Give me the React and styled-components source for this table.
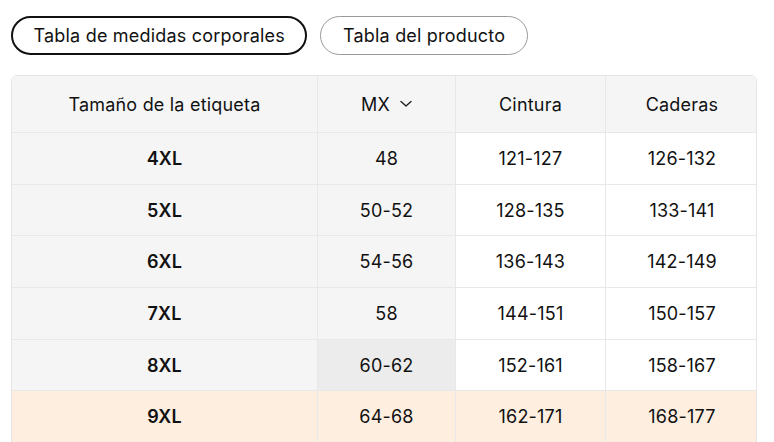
import React from "react";
import styled, { createGlobalStyle } from "styled-components";

const Global = createGlobalStyle`
  html, body { margin: 0; padding: 0; background: #fff; }
  body { font-family: Inter, "Noto Sans", "Liberation Sans", sans-serif; color: #111; }
`;

const Page = styled.div`
  padding: 16px 17px 0 11px;
  display: flex;
  flex-direction: column;
  gap: 20px;
`;

const Tabs = styled.div`
  display: flex;
  gap: 13px;
`;

const Tab = styled.button`
  height: 39px;
  border-radius: 20px;
  background: #fff;
  font-family: inherit;
  font-size: 18px;
  letter-spacing: 0.2px;
  color: #111;
  border: ${(p) => (p.$active ? "2px solid #111" : "1px solid #9a9a9a")};
  padding: ${(p) => (p.$active ? "0 20.5px" : "0 21.5px")};
  cursor: pointer;
`;

const Table = styled.div`
  display: grid;
  grid-template-columns: 306px 138px 150px 152px;
  border: 1px solid #e6e6e6;
  border-radius: 6px 6px 0 0;
  overflow: hidden;
  width: 746px;
  box-sizing: border-box;
`;

const Cell = styled.div`
  height: ${(p) => (p.$head ? "56px" : "50.7px")};
  display: flex;
  align-items: center;
  justify-content: center;
  gap: 10px;
  font-size: 18px;
  letter-spacing: 0.2px;
  font-weight: ${(p) => (p.$bold ? 600 : 400)};
  background: ${(p) => p.$bg};
  border-bottom: 1px solid #e8e8e8;
  border-right: ${(p) => (p.$last ? "none" : "1px solid #e8e8e8")};
  box-sizing: content-box;
  color: #111;
`;

const Chevron = () => (
  <svg width="12" height="8" viewBox="0 0 12 8" fill="none">
    <path d="M1 1.5 L6 6 L11 1.5" stroke="#222" strokeWidth="1.4" strokeLinecap="round" strokeLinejoin="round" />
  </svg>
);

const rows = [
  ["4XL", "48", "121-127", "126-132"],
  ["5XL", "50-52", "128-135", "133-141"],
  ["6XL", "54-56", "136-143", "142-149"],
  ["7XL", "58", "144-151", "150-157"],
  ["8XL", "60-62", "152-161", "158-167"],
  ["9XL", "64-68", "162-171", "168-177"],
];

export default function App() {
  return (
    <>
      <Global />
      <Page>
        <Tabs>
          <Tab $active>Tabla de medidas corporales</Tab>
          <Tab>Tabla del producto</Tab>
        </Tabs>
        <Table>
          <Cell $head $bg="#f5f5f5">Tamaño de la etiqueta</Cell>
          <Cell $head $bg="#f5f5f5">MX <Chevron /></Cell>
          <Cell $head $bg="#f5f5f5">Cintura</Cell>
          <Cell $head $bg="#f5f5f5" $last>Caderas</Cell>
          {rows.map((r, i) => {
            const hl = i === 5;
            return r.map((v, j) => {
              let bg = j < 2 ? "#f5f5f5" : "#fff";
              if (i === 4 && j === 1) bg = "#ececec";
              if (hl) bg = "#fdeee0";
              return (
                <Cell key={i + "-" + j} $bg={bg} $bold={j === 0} $last={j === 3}>
                  {v}
                </Cell>
              );
            });
          })}
        </Table>
      </Page>
    </>
  );
}
